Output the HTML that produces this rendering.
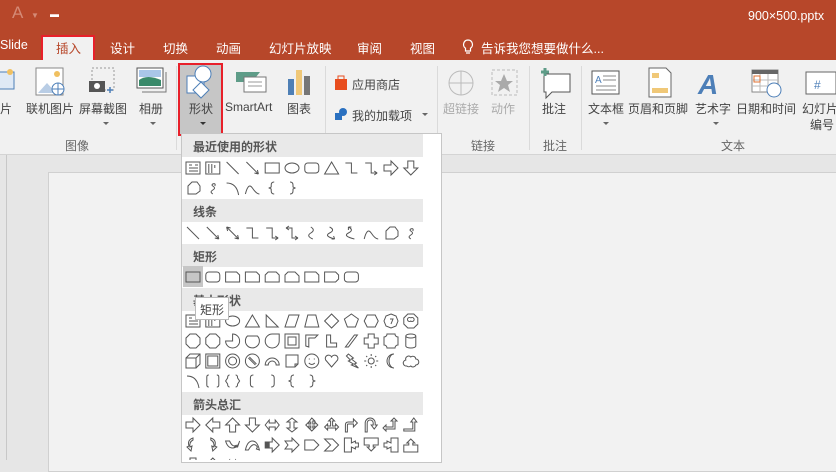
<!DOCTYPE html>
<html><head><meta charset="utf-8">
<style>
*{margin:0;padding:0;box-sizing:border-box}
body{width:836px;height:460px;overflow:hidden;position:relative;background:#e6e6e6;font-family:"Liberation Sans","Noto Sans CJK SC",sans-serif;font-size:12px;color:#444}
.a{position:absolute;white-space:nowrap}
.tb{top:0;left:0;width:836px;height:60px;background:#b7472a;color:#fff}
.tab{top:38px;font-size:12.5px;color:#fff}
.rib{top:60px;left:0;width:836px;height:95px;background:#f1f1f1;border-bottom:1px solid #d4d4d4}
.lbl{top:100px;font-size:12px;color:#444}
.grp{top:137px;font-size:12px;color:#666}
.sep{top:66px;width:1px;height:84px;background:#dadada}
.arr{width:0;height:0;border-left:3px solid transparent;border-right:3px solid transparent;border-top:3px solid #666}
.hdr{left:182px;width:241px;height:23px;background:#e9e9e9;font-size:12px;font-weight:bold;color:#555;padding:4px 0 0 11px}
</style></head><body>
<div class="a tb"></div>
<div class="a" style="left:12px;top:3px;font-size:17px;color:#d48a76">A</div>
<div class="a" style="left:31px;top:11px;font-size:8px;color:#d48a76">▼</div>
<div class="a" style="left:50px;top:9px;color:#fff;font-size:9px">▬</div>
<div class="a" style="left:748px;top:9px;color:#fff;font-size:12.5px">900×500.pptx</div>
<div class="a tab" style="left:0">Slide</div>
<div class="a" style="left:41px;top:35px;width:54px;height:27px;background:#f1f1f1;border:2px solid #e8202a;border-bottom:none"></div>
<div class="a tab" style="left:56px;color:#b7472a">插入</div>
<div class="a tab" style="left:110px">设计</div>
<div class="a tab" style="left:163px">切换</div>
<div class="a tab" style="left:216px">动画</div>
<div class="a tab" style="left:269px">幻灯片放映</div>
<div class="a tab" style="left:357px">审阅</div>
<div class="a tab" style="left:410px">视图</div>
<svg class="a" style="left:462px;top:39px" width="12" height="16"><path d="M6 1a4.5 4.5 0 0 0-2.5 8.2V12h5V9.2A4.5 4.5 0 0 0 6 1zM4 14h4" fill="none" stroke="#fff" stroke-width="1.2"/></svg>
<div class="a tab" style="left:481px">告诉我您想要做什么...</div>

<div class="a rib"></div>
<!-- icons ribbon -->
<svg class="a" style="left:0;top:64px" width="836" height="40">
<rect x="-6" y="8" width="20" height="17" fill="#dfe9f5" stroke="#4d7fb8"/><circle cx="10" cy="8" r="3" fill="#f0c060"/>
<rect x="36" y="4" width="27" height="27" fill="#fff" stroke="#888"/><path d="M38 29l9-10 9 10z" fill="#b9cde5"/><circle cx="57" cy="10" r="3" fill="#f0c060"/><circle cx="58" cy="25" r="6" fill="#fff" stroke="#4d7fb8"/><path d="M52 25h12M58 19v12" stroke="#4d7fb8"/>
<rect x="92" y="4" width="22" height="22" fill="none" stroke="#999" stroke-dasharray="2 2"/><rect x="89" y="17" width="16" height="11" fill="#555"/><circle cx="97" cy="22" r="3" fill="#fff"/><path d="M107 26h6M110 23v6" stroke="#4d7fb8" stroke-width="1.5"/>
<rect x="137" y="4" width="26" height="20" fill="#fff" stroke="#555"/><path d="M139 16q8-6 22 0v6h-22z" fill="#3a8a6a"/><rect x="139" y="6" width="22" height="7" fill="#a9c6e8"/><path d="M142 28h24V8" fill="none" stroke="#777"/>
<rect x="194" y="13" width="17" height="17" fill="#fff" stroke="#4d7fb8"/><circle cx="210" cy="11" r="8" fill="#fff" stroke="#4d7fb8"/><path d="M202 19l8 8-8 8-8-8z" fill="#fff" stroke="#4d7fb8"/>
<path d="M236 8h24l-4 5 4 5h-24z" fill="#5e9c88"/><rect x="244" y="13" width="22" height="15" fill="#fff" stroke="#777"/><path d="M248 18h14M248 22h14" stroke="#999"/>
<rect x="288" y="15" width="6" height="16" fill="#4e7fb5"/><rect x="296" y="6" width="6" height="25" fill="#f0c878"/><rect x="304" y="12" width="6" height="19" fill="#777"/>
<path d="M335 15h12v11h-12z" fill="#e84d1e"/><path d="M338 15v-3h6v3" fill="none" stroke="#e84d1e"/>
<circle cx="461" cy="19" r="12" fill="none" stroke="#bbb"/><path d="M449 19h24M461 7v24" stroke="#bbb"/>
<rect x="492" y="6" width="25" height="25" fill="none" stroke="#bbb" stroke-dasharray="3 2"/><path d="M504 10l3 7h6l-5 4 2 7-6-4-6 4 2-7-5-4h6z" fill="#aaa"/>
<path d="M544 10h26v18h-18l-6 6v-6h-2z" fill="#fff" stroke="#555"/><path d="M541 8h8M545 4v8" stroke="#5e9c88" stroke-width="3"/>
<rect x="592" y="7" width="27" height="23" fill="#fff" stroke="#555"/><text x="595" y="19" font-size="10" fill="#4d7fb8" font-family="Liberation Sans">A</text><path d="M603 12h13M603 16h13M596 22h20M596 26h20" stroke="#888"/>
<path d="M649 4h17l5 5v24h-22z" fill="#fff" stroke="#666"/><rect x="652" y="9" width="7" height="5" fill="#f0c878"/><rect x="652" y="24" width="16" height="5" fill="#f0c878"/>
<text x="698" y="30" font-size="28" font-style="italic" font-weight="bold" fill="#4d7fb8" font-family="Liberation Sans">A</text>
<rect x="752" y="6" width="26" height="22" fill="#fff" stroke="#888"/><rect x="752" y="6" width="26" height="4" fill="#666"/><path d="M752 16h26M752 22h26M760 10v18M768 10v18" stroke="#bbb"/><rect x="754" y="12" width="6" height="6" fill="none" stroke="#e07030"/><circle cx="774" cy="26" r="7" fill="#fff" stroke="#4d7fb8"/>
<rect x="806" y="8" width="30" height="22" fill="#fff" stroke="#666"/><text x="814" y="25" font-size="12" fill="#4d7fb8" font-family="Liberation Sans">#</text>
</svg>
<svg class="a" style="left:334px;top:107px" width="14" height="14"><circle cx="9" cy="5" r="4" fill="#2a70c0"/><rect x="1" y="6" width="7" height="7" fill="#2a70c0"/></svg>
<div class="a" style="left:178px;top:63px;width:45px;height:73px;background:#c6c6c6;border:2px solid #e8202a"></div>
<svg class="a" style="left:178px;top:64px" width="45" height="40"><rect x="9" y="12" width="17" height="17" fill="#fff" stroke="#4d7fb8"/><circle cx="25" cy="10" r="8" fill="#fff" stroke="#4d7fb8"/><path d="M23 18l8 8-8 8-8-8z" fill="#fff" stroke="#4d7fb8"/></svg>
<div class="a lbl" style="left:0">片</div>
<div class="a lbl" style="left:26px">联机图片</div>
<div class="a lbl" style="left:79px">屏幕截图</div>
<div class="a lbl" style="left:139px">相册</div>
<div class="a lbl" style="left:189px">形状</div>
<div class="a lbl" style="left:225px">SmartArt</div>
<div class="a lbl" style="left:287px">图表</div>
<div class="a" style="left:352px;top:76px">应用商店</div>
<div class="a" style="left:352px;top:107px">我的加载项</div>
<div class="a lbl" style="left:443px;color:#aaa">超链接</div>
<div class="a lbl" style="left:491px;color:#aaa">动作</div>
<div class="a lbl" style="left:542px">批注</div>
<div class="a lbl" style="left:588px">文本框</div>
<div class="a lbl" style="left:628px">页眉和页脚</div>
<div class="a lbl" style="left:695px">艺术字</div>
<div class="a lbl" style="left:736px">日期和时间</div>
<div class="a lbl" style="left:802px">幻灯片</div>
<div class="a" style="left:810px;top:116px">编号</div>
<div class="a arr" style="left:103px;top:122px"></div>
<div class="a arr" style="left:150px;top:122px"></div>
<div class="a arr" style="left:200px;top:122px;border-top-color:#333"></div>
<div class="a arr" style="left:422px;top:113px"></div>
<div class="a arr" style="left:185px;top:122px;display:none"></div>
<div class="a arr" style="left:603px;top:122px"></div>
<div class="a arr" style="left:713px;top:122px"></div>
<div class="a grp" style="left:65px">图像</div>
<div class="a grp" style="left:471px">链接</div>
<div class="a grp" style="left:543px">批注</div>
<div class="a grp" style="left:721px">文本</div>
<div class="a sep" style="left:176px"></div>
<div class="a sep" style="left:325px"></div>
<div class="a sep" style="left:437px"></div>
<div class="a sep" style="left:529px"></div>
<div class="a sep" style="left:581px"></div>

<!-- workspace -->
<div class="a" style="left:6px;top:155px;width:1px;height:305px;background:#c8c8c8"></div>
<div class="a" style="left:48px;top:172px;width:800px;height:300px;background:#f2f2f2;border:1px solid #d0d0d0"></div>

<!-- dropdown -->
<div class="a" style="left:181px;top:133px;width:261px;height:330px;background:#fff;border:1px solid #c6c6c6"></div>
<div class="a hdr" style="top:134px">最近使用的形状</div>
<div class="a hdr" style="top:199px">线条</div>
<div class="a hdr" style="top:244px">矩形</div>
<div class="a hdr" style="top:288px">基本形状</div>
<div class="a hdr" style="top:392px">箭头总汇</div>
<div class="a" style="left:183px;top:266px;width:20px;height:21px;background:#c6c6c6"></div>
<svg id="ic" class="a" style="left:0;top:0" width="836" height="460"></svg>
<div class="a" style="left:195px;top:297px;width:34px;height:23px;background:#fff;border:1px solid #bbb;padding:3px 0 0 4px;color:#444">矩形</div>
<script>
var P={
tb:'M1 2h14v12H1z M4 5h3M10 5h3M4 8h9M4 11h9',vtb:'M1 2h14v12H1z M4 4v9M7 4v9M10 5v3',
line:'M2 2L14 14',arrow:'M2 2L14 14M14 14l-1-4M14 14l-4-1',dbl:'M2 2L14 14M2 2l4 1M2 2l1 4M14 14l-1-4M14 14l-4-1',
rect:'M1 3h14v10H1z',oval:'M1 8a7 5 0 1 0 14 0a7 5 0 1 0-14 0',rrect:'M4 3h8a3 3 0 0 1 3 3v4a3 3 0 0 1-3 3H4a3 3 0 0 1-3-3V6a3 3 0 0 1 3-3z',
tri:'M8 2L15 14H1z',elbow:'M2 3h6v10h6',elar:'M2 3h6v10h6M14 13l-3-2M14 13l-3 2',eldbl:'M2 3h6v10h6M2 3l3-2M2 3l3 2M14 13l-3-2M14 13l-3 2',
rar:'M1 5h7V1l7 7-7 7v-4H1z',dar:'M5 1h6v7h4l-7 7-7-7h4z',lar:'M15 5H8V1L1 8l7 7v-4h7z',uar:'M5 15h6V8h4L8 1 1 8h4z',
free:'M3 14V6l4-4h5l3 4v5l-4 3z',scr:'M8 14c-6-4 6-4 0-8c-3-2 4-4 2 0',arc:'M2 3q10 0 12 12',curve:'M1 14q3-12 7-6t7 6',
lb:'M10 2q-3 0-3 3v2l-2 1 2 1v2q0 3 3 3',rb:'M6 2q3 0 3 3v2l2 1-2 1v2q0 3-3 3',
sc:'M7 2q5 3 0 6t2 6',sca:'M6 2q6 3 0 6t5 6M11 14l-1-3M11 14l-3 0',scd:'M5 2q6 3 0 6t6 6M5 2l3 0M5 2l0 3',
s1:'M1 3h11l3 3v7H1z',s2:'M4 3h8l3 3v7H1V6z',s3:'M1 3h11l3 3v4l-3 3H1z',s4:'M4 3h7l4 4v6H1V6z',
rtri:'M2 2v12h12z',para:'M5 2h10l-4 12H1z',trap:'M4 2h8l3 12H1z',dia:'M8 1l7 7-7 7-7-7z',pent:'M8 1l7 5-3 8H4L1 6z',hex:'M4 2h8l3 6-3 6H4L1 8z',
hep:'M8 1l5 2 2 5-2 5-5 2-5-2-2-5 2-5z M7 6h3l-2 5',oct:'M5 1h6l4 4v6l-4 4H5l-4-4V5z M8 5a2 2 0 1 0 0 3a2 2 0 1 0 0-3',
dec:'M5 1h6l4 4v6l-4 4H5l-4-4V5z',pie:'M8 8V1a7 7 0 1 1-7 7z',chord:'M3 3a7 7 0 1 0 10 0z',tear:'M8 1h7v7a7 7 0 1 1-7-7z',
frame:'M1 1h14v14H1z M4 4h8v8H4z',half:'M2 2h12l-3 3H5v9l-3-1z',L:'M3 2h4v8h6v4H3z',diag:'M2 14L11 2h3L5 14z',cross:'M5 1h6v4h4v6h-4v4H5v-4H1V5h4z',
plq:'M4 1h8a3 3 0 0 0 3 3v8a3 3 0 0 0-3 3H4a3 3 0 0 0-3-3V4a3 3 0 0 0 3-3z',can:'M3 3a5 2 0 0 0 10 0a5 2 0 0 0-10 0v10a5 2 0 0 0 10 0V3',
cube:'M1 5h10v10H1z M1 5l4-4h10v10l-4 4M11 5l4-4',bev:'M1 1h14v14H1z M3 3h10v10H3z',donut:'M1 8a7 7 0 1 0 14 0a7 7 0 1 0-14 0M4 8a4 4 0 1 0 8 0a4 4 0 1 0-8 0',
nos:'M1 8a7 7 0 1 0 14 0a7 7 0 1 0-14 0M4 5l7 7M5 4l7 7',barc:'M1 12a7 7 0 0 1 14 0h-3a4 4 0 0 0-8 0z',fold:'M2 2h12v9l-3 3H2z M11 14v-3h3',
smile:'M1 8a7 7 0 1 0 14 0a7 7 0 1 0-14 0M5 6h1M10 6h1M5 10q3 3 6 0',heart:'M8 14L2 7a3 3 0 0 1 6-3a3 3 0 0 1 6 3z',light:'M5 1l5 4-2 1 5 4-2 1 4 4-7-3 2-1-5-3 2-1-4-4z',
sun:'M5 8a3 3 0 1 0 6 0a3 3 0 1 0-6 0M8 1v2M8 13v2M1 8h2M13 8h2M3 3l1 1M12 12l1 1M3 13l1-1M12 4l1-1',moon:'M11 1a7 7 0 1 0 0 14a5 7 0 0 1 0-14z',
cloud:'M4 13a3 3 0 0 1-1-6a3 3 0 0 1 5-3a3 3 0 0 1 5 2a3 3 0 0 1 0 6a3 3 0 0 1-5 1a3 3 0 0 1-4 0z',
bp:'M4 2q-2 0-2 2v8q0 2 2 2M12 2q2 0 2 2v8q0 2-2 2',brp:'M5 2q-2 0-2 3l-2 3 2 3q0 3 2 3M11 2q2 0 2 3l2 3-2 3q0 3-2 3',
lbk:'M9 2q-3 0-3 3v6q0 3 3 3',rbk:'M7 2q3 0 3 3v6q0 3-3 3',
lr:'M1 8l4-5v3h6V3l4 5-4 5v-3H5v3z',ud:'M8 1l5 4h-3v6h3l-5 4-5-4h3V5H3z',quad:'M8 1l3 3H9v3h2V5l3 3-3 3V9H9v2h2l-3 3-3-3h2V9H5v2L2 8l3-3v2h2V5H5z',
lru:'M8 1l3 3H9v5h3V7l3 3-3 3v-2H4v2l-3-3 3-3v2h3V4H5z',bent:'M2 15V8q0-3 3-3h5V2l4 4-4 4V7H5q-1 0-1 1v7z',ut:'M2 15V6a5 5 0 0 1 10 0v2h2l-3 4-3-4h2V6a3 3 0 0 0-6 0v9z',
lu:'M11 1l3 3h-2v8H3v2l-3-3 3-3v2h7V4H8z',bu:'M1 12h9V5H8l3-4 3 4h-2v9H1z',
cr:'M8 1q-6 2-4 8l-2 1 4 4 1-5-2 1q-1-5 3-7z',cl:'M6 1q6 2 4 8l2 1-4 4-1-5 2 1q1-5-3-7z',cu:'M1 4q2 7 7 7t7-7l-2 6h-3l2-2q-4 3-7-4z',cd:'M1 13q2-9 7-9t7 9l-3-1 1-2q-4-6-9 3z',
str:'M1 5h1v6H1zM3 5h1v6H3zM5 5h3V1l7 7-7 7v-4H5z',notch:'M1 4h7V1l7 7-7 7v-3H1l3-4z',pent2:'M1 3h9l5 5-5 5H1z',chev:'M1 2h8l6 6-6 6H1l6-6z',
rc:'M1 1h7v5l4-2v2h3v4h-3v2l-4-2v5H1z',dc:'M1 1h14v7h-5v2h2l-4 4-4-4h2V8H1z',lc:'M15 1H8v5L4 4v2H1v4h3v2l4-2v5h7z',uc:'M1 15h14V8h-5V6h2L8 2 4 6h2v2H1z'
};
var rows=[
[158,['tb','vtb','line','arrow','rect','oval','rrect','tri','elbow','elar','rar','dar']],
[178,['free','scr','arc','curve','lb','rb']],
[223,['line','arrow','dbl','elbow','elar','eldbl','sc','sca','scd','curve','free','scr']],
[267,['rect','rrect','s1','s1','s2','s4','s1','s3','rrect']],
[311,['tb','vtb','oval','tri','rtri','para','trap','dia','pent','hex','hep','oct']],
[331,['dec','dec','pie','chord','tear','frame','half','L','diag','cross','plq','can']],
[351,['cube','bev','donut','nos','barc','fold','smile','heart','light','sun','moon','cloud']],
[371,['arc','bp','brp','lbk','rbk','lb','rb']],
[415,['rar','lar','uar','dar','lr','ud','quad','lru','bent','ut','lu','bu']],
[435,['cr','cl','cu','cd','str','notch','pent2','chev','rc','dc','lc','uc']],
[455,['dar','uar','lr']]
];
var s='';
rows.forEach(function(r){r[1].forEach(function(k,i){
var x=184+i*19.8,y=r[0]+1;
s+='<g transform="translate('+(x+1)+','+(y+1)+')"><path d="'+P[k]+'" fill="'+(k=='tb'||k=='vtb'?'#fff':'none')+'" stroke="#555" stroke-width="1"/></g>';
});});
document.getElementById('ic').innerHTML=s;
</script>
</body></html>
